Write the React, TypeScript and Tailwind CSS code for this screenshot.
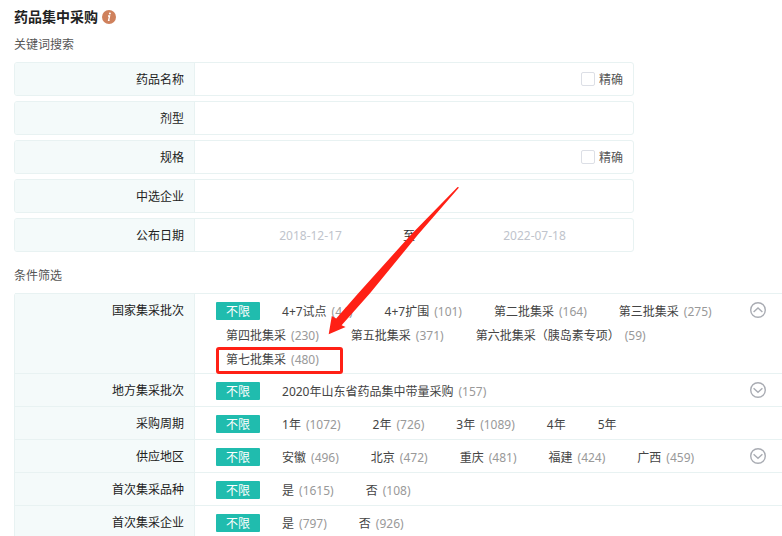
import { useState } from "react";

const keywordFields = [
  { id: "name", label: "药品名称", exact: true },
  { id: "form", label: "剂型", exact: false },
  { id: "spec", label: "规格", exact: true },
  { id: "company", label: "中选企业", exact: false },
];

type Option = { name: string; count?: number; marked?: boolean };
type Filter = { label: string; toggle?: "up" | "down"; options: Option[] };

const filters: Filter[] = [
  {
    label: "国家集采批次",
    toggle: "up",
    options: [
      { name: "4+7试点", count: 44 },
      { name: "4+7扩围", count: 101 },
      { name: "第二批集采", count: 164 },
      { name: "第三批集采", count: 275 },
      { name: "第四批集采", count: 230 },
      { name: "第五批集采", count: 371 },
      { name: "第六批集采（胰岛素专项）", count: 59 },
      { name: "第七批集采", count: 480, marked: true },
    ],
  },
  {
    label: "地方集采批次",
    toggle: "down",
    options: [{ name: "2020年山东省药品集中带量采购", count: 157 }],
  },
  {
    label: "采购周期",
    options: [
      { name: "1年", count: 1072 },
      { name: "2年", count: 726 },
      { name: "3年", count: 1089 },
      { name: "4年" },
      { name: "5年" },
    ],
  },
  {
    label: "供应地区",
    toggle: "down",
    options: [
      { name: "安徽", count: 496 },
      { name: "北京", count: 472 },
      { name: "重庆", count: 481 },
      { name: "福建", count: 424 },
      { name: "广西", count: 459 },
    ],
  },
  {
    label: "首次集采品种",
    options: [
      { name: "是", count: 1615 },
      { name: "否", count: 108 },
    ],
  },
  {
    label: "首次集采企业",
    options: [
      { name: "是", count: 797 },
      { name: "否", count: 926 },
    ],
  },
];

const fieldClass = "flex h-[34px] overflow-hidden rounded-[3px] border border-[#e8f2f2]";
const labelClass = "w-[180px] flex-none border-r border-[#e8f2f2] bg-[#f4fafa] pr-[10px] text-right text-[#222222]";

const FilterRow = ({ label, toggle, options }: Filter) => {
  const [selected, setSelected] = useState("不限");

  return (
    <div className="flex min-h-[33px] border-t border-[#e8f2f2]">
      <div className={`${labelClass} pt-2 leading-[18px]`}>{label}</div>

      <div className="flex flex-1 flex-wrap content-start gap-x-3 gap-y-[6px] pt-2 pb-[5px] pl-[21px]">
        {[{ name: "不限" } as Option, ...options].map((el) => (
          <button
            key={el.name}
            type="button"
            onClick={() => setSelected(el.name)}
            className={`relative flex h-[18px] gap-[5px] px-[10px] leading-[20px] whitespace-nowrap ${
              selected === el.name ? "rounded-[1px] bg-[#20bcae] text-white" : "text-[#444444]"
            }`}
          >
            <span>{el.name}</span>
            {el.count !== undefined && <span className="text-[#999999]">({el.count})</span>}
            {el.marked && <span className="absolute -top-[3px] left-0 h-[27px] w-[127px] rounded-[3px] border-3 border-[#ff2015]" />}
          </button>
        ))}
      </div>

      <div className="w-[32px] flex-none pt-2">
        {toggle && (
          <button type="button" aria-label="展开或收起" className="block">
            <svg width="16" height="16" viewBox="0 0 16 16" fill="none" stroke="#a9acb3" strokeWidth="1.4">
              <circle cx="8" cy="8" r="7.3" />
              <path d={toggle === "up" ? "M3.6 9.9 8 5.9l4.4 4" : "M3.6 6.3 8 10.3l4.4-4"} />
            </svg>
          </button>
        )}
      </div>
    </div>
  );
};

const App = () => {
  return (
    <div className="relative h-screen overflow-hidden bg-white pt-[6px] pl-[14px] font-['Noto_Sans','Noto_Sans_CJK_SC',sans-serif] text-xs">
      <div className="flex items-center gap-1">
        <h1 className="text-sm leading-[22px] font-bold text-[#222222]">药品集中采购</h1>
        <svg width="14" height="14" viewBox="0 0 14 14">
          <circle cx="7" cy="7" r="7" fill="#cf815c" />
          <circle cx="7.9" cy="3.6" r="1" fill="#fff" />
          <path d="M6 6h1.6L6.6 10.4h1" fill="none" stroke="#fff" strokeWidth="1.3" />
        </svg>
      </div>

      <h2 className="mt-2 mb-2 leading-[18px] text-[#555555]">关键词搜索</h2>

      <div className="flex max-w-[620px] flex-col gap-[5px]">
        {keywordFields.map((el) => (
          <div key={el.id} className={fieldClass}>
            <label htmlFor={el.id} className={`${labelClass} leading-[34px]`}>
              {el.label}
            </label>
            <input id={el.id} type="text" className="min-w-0 flex-1 px-3 outline-none" />
            {el.exact && (
              <label className="flex items-center gap-1 pr-[10px] text-[#555555]">
                <input type="checkbox" className="size-[14px] appearance-none rounded-[2px] border border-[#dcdfe6] bg-white checked:bg-[#20bcae]" />
                <span className="pt-[2px]">精确</span>
              </label>
            )}
          </div>
        ))}

        <div className={fieldClass}>
          <label htmlFor="start" className={`${labelClass} leading-[34px]`}>
            公布日期
          </label>
          <div className="flex flex-1 items-center pt-px pr-[6px] pl-[23px]">
            <input id="start" type="text" placeholder="2018-12-17" className="min-w-0 flex-1 text-center outline-none placeholder:text-[#c0c4cc]" />
            <span className="w-[39px] text-[#303133]">至</span>
            <input aria-label="结束日期" type="text" placeholder="2022-07-18" className="min-w-0 flex-1 text-center outline-none placeholder:text-[#c0c4cc]" />
          </div>
        </div>
      </div>

      <h2 className="mt-[15px] mb-2 leading-[18px] text-[#555555]">条件筛选</h2>

      <div className="rounded-tl-[3px] border-l border-[#e8f2f2]">
        {filters.map((el) => (
          <FilterRow key={el.label} {...el} />
        ))}
      </div>

      {/* pointer to the seventh batch */}
      <svg className="pointer-events-none absolute top-[186px] left-[327px]" width="134" height="150" viewBox="0 0 134 150">
        <path d="M130.6 1 83.7 49 31.3 107.3 9.2 132.5 4.8 130 1.7 148.3 18.6 141 14.6 139.3 43 107.3 90.7 49 132 1.6Z" fill="#ff2015" />
      </svg>
    </div>
  );
};

export default App;
